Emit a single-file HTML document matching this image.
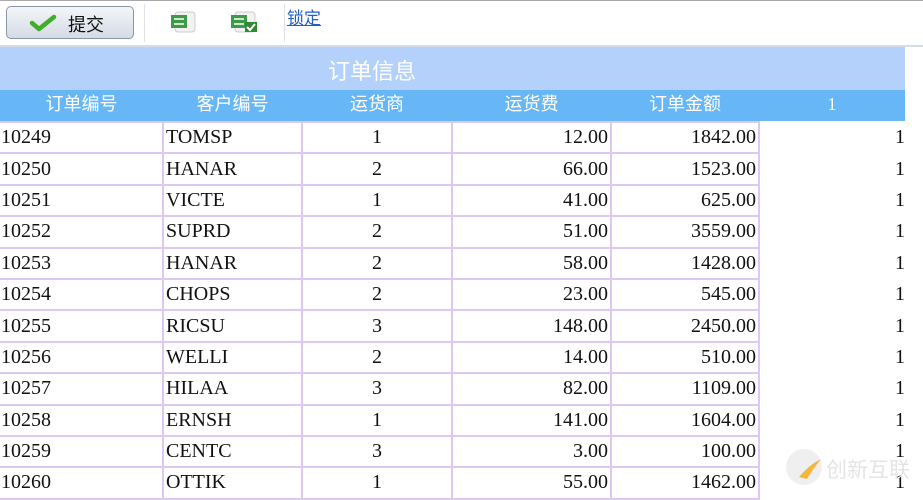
<!DOCTYPE html>
<html><head><meta charset="utf-8"><style>
body{margin:0;width:923px;height:498px;overflow:hidden;background:#fff;position:relative;font-family:"Liberation Serif",serif}
.tb{position:absolute;left:0;top:0;width:923px;height:44px;background:#fff;border-top:1px solid #aaa;border-bottom:2px solid #d6dce4}
.btn{position:absolute;left:6px;top:5px;width:126px;height:31px;border:1px solid #8a97a8;border-radius:5px;background:linear-gradient(#f4f6f9,#d4dbe5);font:18px "Liberation Sans","Noto Sans CJK SC",sans-serif;color:#111}
.sep{position:absolute;top:3px;width:1px;height:38px;background:#dde2e8}
.t{position:absolute;font-family:"Liberation Sans","Noto Sans CJK SC",sans-serif}
.title{position:absolute;left:0;top:47px;width:905px;height:43px;background:#b3d1fb}
.hdr{position:absolute;left:0;top:90px;width:905px;height:31px;background:#67b7f6}
.h{position:absolute;top:90px;color:#fff;font:18px "Liberation Sans","Noto Sans CJK SC",sans-serif;line-height:29px;text-align:center}
table{position:absolute;left:0;top:121px;border-collapse:collapse;table-layout:fixed;font-size:20px;color:#111}
td{height:29.4px;padding:0 2px;border:2px solid #dcc8f3;white-space:nowrap;overflow:hidden}
td:first-child{border-left:none;padding-left:1px}
td.l{border:none;text-align:right;padding-right:0}
</style></head><body>
<div class="tb">
 <div class="btn"><svg style="position:absolute;left:22px;top:7px" width="28" height="18"><path d="M3 9 L10 15 L25 3" stroke="#3fae2a" stroke-width="4.5" fill="none" stroke-linecap="round" stroke-linejoin="round"/></svg><span style="position:absolute;left:61px;top:4px">提交</span></div>
 <div class="sep" style="left:144px"></div>
 <svg style="position:absolute;left:169px;top:10px" width="30" height="24"><rect x="6" y="1" width="20" height="20" rx="3" fill="#f2f2f2" stroke="#ccc"/><rect x="2" y="4" width="16" height="13" fill="#3c9a4a"/><path d="M5 8h10M5 13h10" stroke="#cfe8c9" stroke-width="2"/></svg>
 <svg style="position:absolute;left:229px;top:10px" width="32" height="24"><rect x="6" y="1" width="20" height="20" rx="3" fill="#f2f2f2" stroke="#ccc"/><rect x="2" y="4" width="16" height="13" fill="#3c9a4a"/><path d="M5 8h10M5 13h10" stroke="#cfe8c9" stroke-width="2"/><rect x="16" y="11" width="12" height="10" fill="#2f8a2f"/><path d="M18 16l3 3 5-6" stroke="#fff" stroke-width="2" fill="none"/></svg>
 <div class="sep" style="left:284px"></div>
 <span class="t" style="left:287px;top:3px;font-size:17px;color:#1f5fc8;text-decoration:underline">锁定</span>
</div>
<div class="title"><span class="t" style="left:328px;top:7px;font-size:22px;color:#fff">订单信息</span></div>
<div class="hdr"></div>
<div class="h" style="left:0;width:163px">订单编号</div>
<div class="h" style="left:163px;width:139px">客户编号</div>
<div class="h" style="left:302px;width:150px">运货商</div>
<div class="h" style="left:452px;width:159px">运货费</div>
<div class="h" style="left:611px;width:148px">订单金额</div>
<div class="h" style="left:759px;width:146px;font-family:'Liberation Serif',serif;line-height:29px">1</div>
<table>
<colgroup><col style="width:163px"><col style="width:139px"><col style="width:150px"><col style="width:159px"><col style="width:148px"><col style="width:146px"></colgroup>
<tr><td>10249</td><td>TOMSP</td><td align=center>1</td><td align=right>12.00</td><td align=right>1842.00</td><td class=l>1</td></tr>
<tr><td>10250</td><td>HANAR</td><td align=center>2</td><td align=right>66.00</td><td align=right>1523.00</td><td class=l>1</td></tr>
<tr><td>10251</td><td>VICTE</td><td align=center>1</td><td align=right>41.00</td><td align=right>625.00</td><td class=l>1</td></tr>
<tr><td>10252</td><td>SUPRD</td><td align=center>2</td><td align=right>51.00</td><td align=right>3559.00</td><td class=l>1</td></tr>
<tr><td>10253</td><td>HANAR</td><td align=center>2</td><td align=right>58.00</td><td align=right>1428.00</td><td class=l>1</td></tr>
<tr><td>10254</td><td>CHOPS</td><td align=center>2</td><td align=right>23.00</td><td align=right>545.00</td><td class=l>1</td></tr>
<tr><td>10255</td><td>RICSU</td><td align=center>3</td><td align=right>148.00</td><td align=right>2450.00</td><td class=l>1</td></tr>
<tr><td>10256</td><td>WELLI</td><td align=center>2</td><td align=right>14.00</td><td align=right>510.00</td><td class=l>1</td></tr>
<tr><td>10257</td><td>HILAA</td><td align=center>3</td><td align=right>82.00</td><td align=right>1109.00</td><td class=l>1</td></tr>
<tr><td>10258</td><td>ERNSH</td><td align=center>1</td><td align=right>141.00</td><td align=right>1604.00</td><td class=l>1</td></tr>
<tr><td>10259</td><td>CENTC</td><td align=center>3</td><td align=right>3.00</td><td align=right>100.00</td><td class=l>1</td></tr>
<tr><td>10260</td><td>OTTIK</td><td align=center>1</td><td align=right>55.00</td><td align=right>1462.00</td><td class=l>1</td></tr>
</table>
<div style="position:absolute;left:786px;top:449px;width:36px;height:36px;border-radius:50%;background:rgba(235,235,235,.8)"></div>
<svg style="position:absolute;left:795px;top:455px" width="30" height="26"><path d="M4 22 Q14 10 26 4 Q18 14 12 24Z" fill="#f3b53a"/></svg>
<span class="t" style="left:826px;top:454px;font-size:21px;color:rgba(225,225,225,.9)">创新互联</span>
</body></html>
